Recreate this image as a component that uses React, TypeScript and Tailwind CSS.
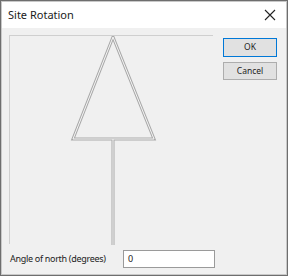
export default function App() {
  return (
    <div
      className="w-[288px] h-[276px] bg-[#6e6e6e] p-px"
      style={{ fontFamily: '"Noto Sans", "DejaVu Sans", sans-serif' }}
    >
      <div className="w-full h-full flex flex-col bg-[#f0f0f0] border border-[#c8c8c8]">
        {/* title bar */}
        <div className="h-[26px] bg-white flex items-center justify-between pl-[6px] pr-[7px] shrink-0">
          <span className="text-[11px] text-[#1a1a1a]">Site Rotation</span>
          <svg width="12" height="12" viewBox="0 0 12 12" className="mr-[3px]">
            <path d="M1 1 L11 11 M11 1 L1 11" stroke="#222" strokeWidth="1.1" />
          </svg>
        </div>

        <div className="flex flex-1">
          <div className="flex flex-col pl-[7px] pt-[7px]">
            {/* drawing area */}
            <div className="w-[204px] h-[209px] border-t border-l border-[#cfcfcf] relative">
              <svg width="204" height="209" viewBox="0 0 204 209">
                <g stroke="#a9a9a9" strokeWidth="3" fill="none">
                  <path d="M103 1 L63 103 L144 103 Z" />
                  <path d="M103 103 L103 209" />
                </g>
                <g stroke="#f6f6f6" strokeWidth="1" fill="none">
                  <path d="M103 1 L63 103 L144 103 Z" />
                  <path d="M103 103 L103 209" />
                </g>
              </svg>
            </div>
            <div className="flex items-center mt-[6px] h-[18px]">
              <span className="text-[9px] tracking-[-0.3px] text-[#222] w-[114px] pl-[1px]">
                Angle of north (degrees)
              </span>
              <div className="w-[92px] h-[18px] bg-white border border-[#9a9a9a] flex items-center pl-[4px] text-[9px] text-[#222]">
                0
              </div>
            </div>
          </div>

          <div className="flex flex-col gap-[5px] ml-[8px] pt-[10px]">
            <button className="w-[54px] h-[19px] bg-[#e1e1e1] border border-[#0078d7] text-[8.5px] text-[#222]">
              OK
            </button>
            <button className="w-[54px] h-[18px] bg-[#e1e1e1] border border-[#adadad] text-[8.5px] text-[#222]">
              Cancel
            </button>
          </div>
        </div>
      </div>
    </div>
  );
}
